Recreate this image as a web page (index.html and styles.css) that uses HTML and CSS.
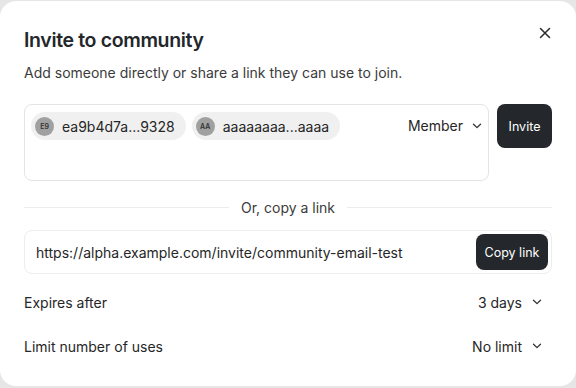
FILE: index.html
```html
<!DOCTYPE html>
<html>
<head>
<meta charset="utf-8">
<link rel="stylesheet" href="styles.css">
</head>
<body>
<div class="dialog">
  <div class="header">
    <h1 class="title">Invite to community</h1>
    <button class="close" aria-label="Close">
      <svg width="12" height="12" viewBox="0 0 12 12"><path d="M1.5 1.5L10.5 10.5M10.5 1.5L1.5 10.5" stroke="#2a2a2a" stroke-width="1.5" stroke-linecap="round"/></svg>
    </button>
  </div>
  <p class="subtitle">Add someone directly or share a link they can use to join.</p>

  <div class="invite-row">
    <div class="invite-box">
      <div class="chips">
        <span class="chip"><span class="avatar">E9</span>ea9b4d7a...9328</span>
        <span class="chip"><span class="avatar">AA</span>aaaaaaaa...aaaa</span>
      </div>
      <div class="role">Member
        <svg class="chev" width="10" height="6" viewBox="0 0 10 6"><path d="M1.5 1.2L5 4.6L8.5 1.2" fill="none" stroke="#333" stroke-width="1.3" stroke-linecap="round" stroke-linejoin="round"/></svg>
      </div>
    </div>
    <button class="btn invite-btn">Invite</button>
  </div>

  <div class="divider"><span class="line"></span><span class="divider-text">Or, copy a link</span><span class="line"></span></div>

  <div class="link-box">
    <span class="link-text">https://alpha.example.com/invite/community-email-test</span>
    <button class="btn copy-btn">Copy link</button>
  </div>

  <div class="setting">
    <span class="label">Expires after</span>
    <span class="value">3 days
      <svg class="chev" width="10" height="6" viewBox="0 0 10 6"><path d="M1.5 1.2L5 4.6L8.5 1.2" fill="none" stroke="#333" stroke-width="1.3" stroke-linecap="round" stroke-linejoin="round"/></svg>
    </span>
  </div>
  <div class="setting">
    <span class="label">Limit number of uses</span>
    <span class="value">No limit
      <svg class="chev" width="10" height="6" viewBox="0 0 10 6"><path d="M1.5 1.2L5 4.6L8.5 1.2" fill="none" stroke="#333" stroke-width="1.3" stroke-linecap="round" stroke-linejoin="round"/></svg>
    </span>
  </div>
</div>
</body>
</html>
```

FILE: styles.css
```css
* { box-sizing: border-box; }
html, body {
  margin: 0;
  padding: 0;
  width: 576px;
  height: 388px;
  background: #e6e6e6;
  overflow: hidden;
}
body {
  font-family: Inter, "Noto Sans", sans-serif;
  color: #222;
  padding-top: 1px;
}
.dialog {
  width: 576px;
  height: 385px;
  background: #fff;
  border-radius: 16px;
  padding: 26px 24px 0 24px;
}
.header {
  display: flex;
  justify-content: space-between;
  align-items: center;
  height: 26px;
}
.title {
  margin: 0;
  font-size: 19.5px;
  font-weight: 600;
  color: #23272b;
  letter-spacing: -0.35px;
}
.close {
  border: 0;
  background: none;
  padding: 0;
  margin-right: -1px;
  margin-top: -14px;
  width: 16px;
  height: 16px;
  display: flex;
  align-items: center;
  justify-content: center;
}
.subtitle {
  margin: 10px 0 0 0;
  font-size: 14px;
  line-height: 20px;
  color: #3b3b3b;
}
.invite-row {
  display: flex;
  gap: 8px;
  margin-top: 21px;
  align-items: flex-start;
}
.invite-box {
  flex: 1;
  height: 77px;
  border: 1px solid #e4e4e4;
  border-radius: 8px;
  padding: 7px 6px 0 6px;
  display: flex;
  justify-content: space-between;
  align-items: flex-start;
}
.chips {
  display: flex;
  gap: 6px;
}
.chip {
  display: inline-flex;
  align-items: center;
  height: 28px;
  background: #f0f0f0;
  border-radius: 14px;
  padding: 0 11px 0 4px;
  font-size: 14px;
  color: #262626;
  gap: 8px;
}
.avatar {
  width: 19px;
  height: 19px;
  border-radius: 50%;
  background: #a0a0a0;
  color: #333;
  font-size: 7px;
  font-weight: 600;
  display: inline-flex;
  align-items: center;
  justify-content: center;
}
.role {
  display: flex;
  align-items: center;
  gap: 9px;
  font-size: 14px;
  color: #262626;
  margin-top: 5px;
}
.btn {
  border: 0;
  background: #24282c;
  color: #fff;
  font-family: Inter, "Noto Sans", sans-serif;
  border-radius: 8px;
  font-size: 12.5px;
}
.invite-btn {
  width: 55px;
  height: 44px;
}
.divider {
  display: flex;
  align-items: center;
  gap: 12px;
  margin-top: 18px;
}
.line {
  flex: 1;
  height: 1px;
  background: #ececec;
}
.divider-text {
  font-size: 14px;
  color: #3b3b3b;
}
.link-box {
  margin-top: 14px;
  height: 44px;
  border: 1px solid #ededed;
  border-radius: 8px;
  display: flex;
  align-items: center;
  justify-content: space-between;
  padding: 0 3px 0 11px;
}
.link-text {
  font-size: 14px;
  color: #262626;
}
.copy-btn {
  width: 72px;
  height: 36px;
}
.setting {
  display: flex;
  justify-content: space-between;
  align-items: center;
  height: 20px;
  font-size: 14px;
  color: #262626;
}
.link-box + .setting { margin-top: 18px; }
.setting + .setting { margin-top: 24px; }
.value {
  display: flex;
  align-items: center;
  gap: 10px;
  padding-right: 10px;
}
```
